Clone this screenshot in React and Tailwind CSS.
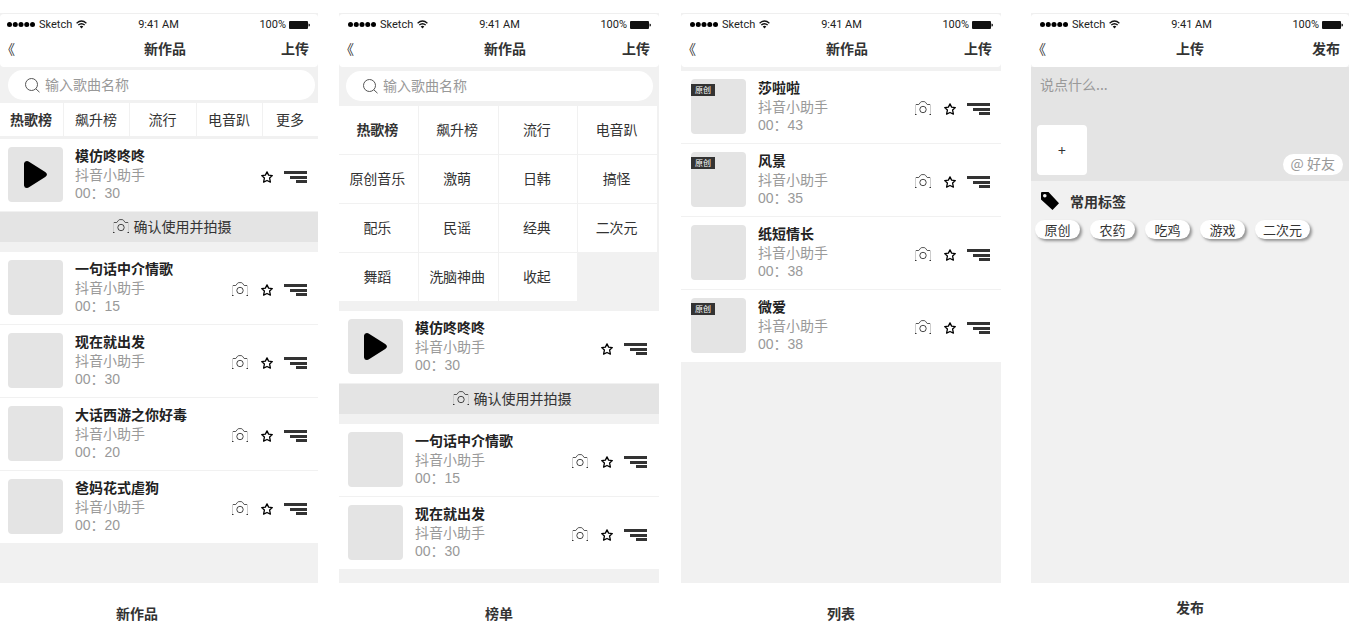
import { useState } from "react";
import clsx from "clsx";

const hotSongs = [
  { name: "一句话中介情歌", time: "00：15" },
  { name: "现在就出发", time: "00：30" },
  { name: "大话西游之你好毒", time: "00：20" },
  { name: "爸妈花式虐狗", time: "00：20" },
];

const listSongs = [
  { name: "莎啦啦", time: "00：43", original: true },
  { name: "风景", time: "00：35", original: true },
  { name: "纸短情长", time: "00：38" },
  { name: "微爱", time: "00：38", original: true },
];

const shortTabs = ["热歌榜", "飙升榜", "流行", "电音趴", "更多"];

const allTabs = [
  "热歌榜", "飙升榜", "流行", "电音趴",
  "原创音乐", "激萌", "日韩", "搞怪",
  "配乐", "民谣", "经典", "二次元",
  "舞蹈", "洗脑神曲", "收起",
];

const tags = ["原创", "农药", "吃鸡", "游戏", "二次元"];

/* ICONS */

function CameraIcon() {
  return (
    <svg width="16" height="15" viewBox="0 0 16 15" fill="none" className="shrink-0">
      <path d="M.8 3.500h3L5.500 1.300Q6 .6 7 .6h2q1 0 1.500.7l1.700 2.200h3" stroke="#444" strokeWidth="0.9" />
      <path d="M.5 4v9M15.500 4v9" stroke="#ccc" />
      <path d="M0 13.500h1.500M14.500 13.500H16" stroke="#333" />
      <circle cx="8" cy="8.500" r="3.200" stroke="#333" strokeWidth="0.9" />
    </svg>
  );
}

function StarIcon() {
  return (
    <svg width="12" height="12" viewBox="0 0 12 12" fill="none" className="shrink-0">
      <path
        d="M6 .9l1.600 3.200 3.700.5-2.700 2.500.8 4L6 9.500l-3.400 1.600.8-4L.7 4.600l3.700-.5z"
        stroke="#000"
        strokeWidth="1.300"
        strokeLinejoin="round"
      />
    </svg>
  );
}

function MenuIcon() {
  return (
    <svg width="23" height="12" viewBox="0 0 23 12" fill="#333" className="shrink-0" shapeRendering="crispEdges">
      <path d="M0 0h23v3H0zM6 5h17v3H6zM12 9h11v3H12z" />
    </svg>
  );
}

function PlayIcon() {
  return (
    <svg width="23" height="27" viewBox="0 0 23 27">
      <path d="M0 2.500Q.3 0 2.800 0q1.300 0 2.600.9l15.800 10q3.500 2.600 0 5.200L5.400 26.100Q4.100 27 2.800 27 .3 27 0 24.500z" />
    </svg>
  );
}

function SearchIcon() {
  return (
    <svg width="15" height="15" viewBox="0 0 15 15" fill="none" stroke="#555" className="shrink-0">
      <circle cx="6.500" cy="6.500" r="6" />
      <path d="M10.800 10.800l3.700 3.400" />
    </svg>
  );
}

function WifiIcon() {
  return (
    <svg width="11" height="9" viewBox="0 0 11 9" fill="none" stroke="#111" strokeWidth="1.300">
      <path d="M.6 3.200q4.900-4.400 9.800 0M2.300 5.100q3.200-2.800 6.400 0" />
      <path d="M3.700 6.500q1.800-1.300 3.600 0L5.500 8.400z" fill="#111" stroke="none" />
    </svg>
  );
}

function BatteryIcon() {
  return (
    <svg width="21" height="8" viewBox="0 0 21 8">
      <rect width="19" height="8" rx="1" fill="#111" />
      <path d="M19.500 2.500q1.500 0 1.500 1.500t-1.500 1.500z" fill="#111" />
    </svg>
  );
}

function TagIcon() {
  return (
    <svg width="18" height="18" viewBox="0 0 18 18">
      <path
        fillRule="evenodd"
        d="M0 1q0-1 1-1h6.500L18 11.200 11.500 18 0 7.500zM3.800 2a1.800 1.800 0 100 3.600 1.800 1.800 0 000-3.600z"
      />
    </svg>
  );
}

/* SHARED PARTS */

function Header({ title, action, pad = "pl-[9px] pr-2", backWidth = "w-12" }) {
  return (
    <header className="rounded border-t border-[#efefef] bg-white pb-[7px]">
      <div className={clsx("flex h-[21px] items-center font-[Roboto,sans-serif] text-[11px] text-[#222]", pad)}>
        <div className="flex flex-1 items-center gap-1">
          <svg width="28" height="5" viewBox="0 0 28 5" fill="#000">
            <circle cx="2.500" cy="2.500" r="2.500" />
            <circle cx="8.250" cy="2.500" r="2.500" />
            <circle cx="14" cy="2.500" r="2.500" />
            <circle cx="19.750" cy="2.500" r="2.500" />
            <circle cx="25.500" cy="2.500" r="2.500" />
          </svg>
          <span>Sketch</span>
          <WifiIcon />
        </div>
        <span>9:41 AM</span>
        <div className="flex flex-1 items-center justify-end gap-[3px]">
          <span>100%</span>
          <BatteryIcon />
        </div>
      </div>
      <div className="flex h-[25px] items-center pr-[9px] pl-px">
        <button type="button" aria-label="返回" className={clsx("text-left", backWidth)}>《</button>
        <h1 className="flex-1 text-center font-bold">{title}</h1>
        <button type="button" className="font-bold">{action}</button>
      </div>
    </header>
  );
}

function SearchBar({ id, className }) {
  return (
    <div className={className}>
      <label htmlFor={id} className="flex h-[30px] items-center gap-[5px] rounded-full bg-white pl-[17px]">
        <SearchIcon />
        <input
          id={id}
          type="search"
          aria-label="输入歌曲名称"
          placeholder="输入歌曲名称"
          className="min-w-0 flex-1 bg-transparent pb-[2px] outline-none placeholder:text-[#999]"
        />
      </label>
    </div>
  );
}

function SongRow({ song, playing, pad = "pl-[9px] pr-3" }) {
  return (
    <li className={clsx("flex border-b border-[#f1f1f1] bg-white pt-[6px] pb-[8px]", pad)}>
      <div className="relative mt-[2px] flex size-[55px] shrink-0 items-center justify-center rounded bg-[#e4e4e4]">
        {playing && <PlayIcon />}
        {song.original && (
          <span className="absolute top-[5px] left-0 h-3 w-6 bg-[#333] text-center text-[8px] leading-3 text-white">
            原创
          </span>
        )}
      </div>
      <div className="ml-3 flex-1 leading-[19px]">
        <h2 className="leading-5 font-bold text-[#222]">{song.name}</h2>
        <p className="text-[#999]">抖音小助手</p>
        <p className="font-['Liberation_Sans','Noto_Sans_CJK_SC',sans-serif] text-[#999]">{song.time}</p>
      </div>
      <div className="flex items-center gap-[11px] pt-[5px]">
        {!playing && (
          <button type="button" aria-label="拍摄" className="mr-[2px]"><CameraIcon /></button>
        )}
        <button type="button" aria-label="收藏"><StarIcon /></button>
        <button type="button" aria-label="详情"><MenuIcon /></button>
      </div>
    </li>
  );
}

function NowPlaying({ pad }) {
  return (
    <>
      <ul>
        <SongRow song={{ name: "模仿咚咚咚", time: "00：30" }} playing pad={pad} />
      </ul>
      <button
        type="button"
        className="mb-[10px] flex h-[30px] w-full items-center justify-center gap-[5px] bg-[#e4e4e4] pb-[2px] pl-[26px]"
      >
        <CameraIcon />
        确认使用并拍摄
      </button>
    </>
  );
}

function Screen({ caption, className, captionClass = "mt-5", children }) {
  return (
    <figure className={clsx("min-w-0 basis-0", className)}>
      <div className="min-h-[570px] bg-[#f1f1f1]">{children}</div>
      <figcaption className={clsx("text-center leading-5 font-bold", captionClass)}>{caption}</figcaption>
    </figure>
  );
}

export default function App() {
  const [active, setActive] = useState("热歌榜");

  return (
    <main className="flex min-h-screen bg-white pt-[13px] font-['Noto_Sans_CJK_SC',sans-serif] text-[14px] leading-5 text-[#333]">
      {/* New work */}
      <Screen caption="新作品" className="grow-[318]" captionClass="mt-5 pr-11">
        <Header title="新作品" action="上传" pad="pl-[7px] pr-2" />
        <SearchBar id="search-new" className="pt-[3px] pr-[3px] pb-[3px] pl-2" />
        <nav className="mb-[3px] grid grid-cols-[63fr_65fr_66fr_65fr_55fr] gap-px">
          {shortTabs.map((tab) => (
            <button
              key={tab}
              type="button"
              onClick={() => setActive(tab)}
              className={clsx("h-[33px] bg-white pr-px pb-[2px]", tab === active && "font-bold")}
            >
              {tab}
            </button>
          ))}
        </nav>
        <NowPlaying pad="pl-2 pr-[11px]" />
        <ul>
          {hotSongs.map((song) => (
            <SongRow key={song.name} song={song} pad="pl-2 pr-[11px]" />
          ))}
        </ul>
      </Screen>

      {/* Charts */}
      <Screen caption="榜单" className="ml-[21px] grow-[320]">
        <Header title="新作品" action="上传" />
        <SearchBar id="search-chart" className="pt-1 pr-[6px] pb-[5px] pl-[7px]" />
        <nav className="mb-[10px] grid grid-cols-4 gap-px pr-[2px]">
          {allTabs.map((tab) => (
            <button
              key={tab}
              type="button"
              onClick={() => setActive(tab)}
              className={clsx("h-12 bg-white pr-[2px] pb-[2px]", tab === active && "font-bold")}
            >
              {tab}
            </button>
          ))}
        </nav>
        <NowPlaying />
        <ul>
          {hotSongs.slice(0, 2).map((song) => (
            <SongRow key={song.name} song={song} />
          ))}
        </ul>
      </Screen>

      {/* List */}
      <Screen caption="列表" className="ml-[22px] grow-[320]">
        <Header title="新作品" action="上传" />
        <ul className="pt-1">
          {listSongs.map((song) => (
            <SongRow key={song.name} song={song} pad="pl-[10px] pr-[11px]" />
          ))}
        </ul>
      </Screen>

      {/* Publish */}
      <Screen caption="发布" className="ml-[30px] grow-[318]" captionClass="mt-[14px]">
        <Header title="上传" action="发布" pad="pl-[9px] pr-[6px]" backWidth="w-9" />
        <section className="bg-[#e4e4e4] px-[6px] pt-[7px] pb-[6px]">
          <textarea
            aria-label="说点什么"
            placeholder="说点什么..."
            className="block h-[51px] w-full resize-none bg-transparent px-[3px] outline-none placeholder:text-[#999]"
          />
          <div className="flex items-end justify-between">
            <button type="button" aria-label="添加" className="size-[50px] rounded bg-white">+</button>
            <button type="button" className="h-[21px] rounded-full bg-white px-2 pb-[2px] leading-[19px] text-[#999]">
              @ 好友
            </button>
          </div>
        </section>
        <section className="px-1 pt-[10px]">
          <div className="flex items-center gap-[11px] pl-[6px]">
            <TagIcon />
            <h2 className="font-bold">常用标签</h2>
          </div>
          <div className="mt-[9px] flex flex-wrap gap-[10px]">
            {tags.map((tag) => (
              <button
                key={tag}
                type="button"
                className="h-[19px] min-w-[45px] rounded-full bg-white px-2 text-[13px] leading-[19px] shadow-[2px_2px_3px_rgba(0,0,0,0.4)]"
              >
                {tag}
              </button>
            ))}
          </div>
        </section>
      </Screen>
    </main>
  );
}
